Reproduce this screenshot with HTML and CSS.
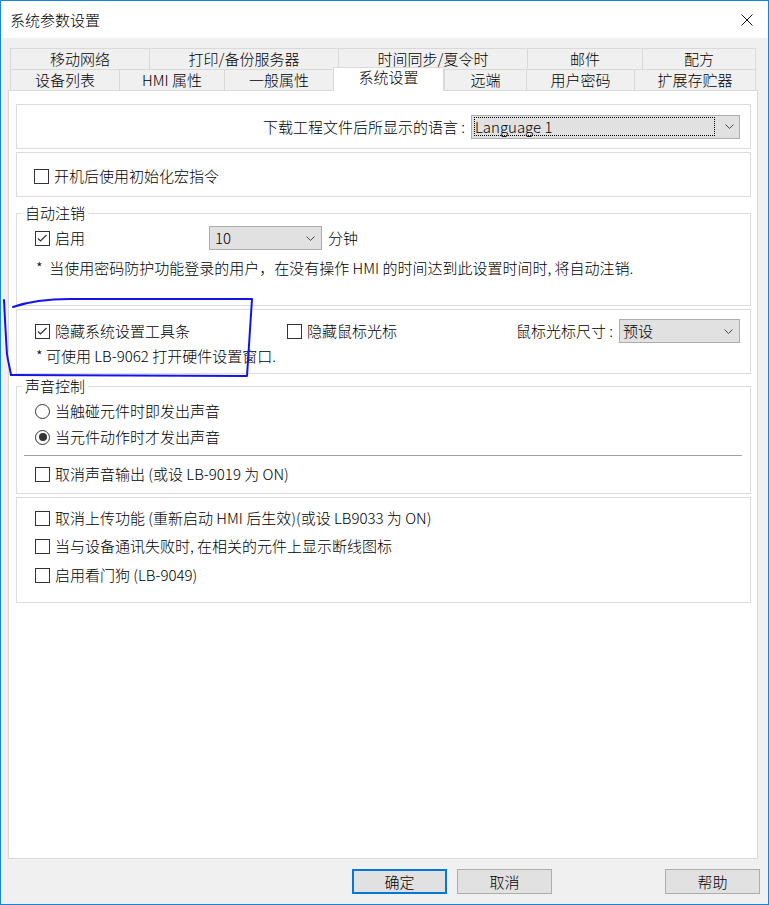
FILE: index.html
```html
<!DOCTYPE html>
<html lang="zh-CN">
<head>
<meta charset="utf-8">
<title>系统参数设置</title>
<link rel="stylesheet" href="styles.css">
</head>
<body>
<div class="window">
  <div class="titlebar">
    <span class="title">系统参数设置</span>
    <svg class="close" width="12" height="12" viewBox="0 0 12 12"><path d="M0.5 0.5 L11.5 11.5 M11.5 0.5 L0.5 11.5"/></svg>
  </div>
  <div class="body">
    <div class="tabs">
      <div class="tabrow top">
        <div class="tab">移动网络</div>
        <div class="tab">打印/备份服务器</div>
        <div class="tab">时间同步/夏令时</div>
        <div class="tab">邮件</div>
        <div class="tab">配方</div>
      </div>
      <div class="tabrow bottom">
        <div class="tab">设备列表</div>
        <div class="tab">HMI 属性</div>
        <div class="tab">一般属性</div>
        <div class="tab active">系统设置</div>
        <div class="tab">远端</div>
        <div class="tab">用户密码</div>
        <div class="tab">扩展存贮器</div>
      </div>
    </div>
    <div class="panel">
      <div class="box lang">
        <span class="label">下载工程文件后所显示的语言 :</span>
        <div class="select lang-select"><span class="val">Language 1</span><svg class="chev" viewBox="0 0 9 5"><path d="M0.5 0.5 L4.5 4.5 L8.5 0.5"/></svg></div>
      </div>
      <div class="box init">
        <label class="check"><span class="cb"></span><span>开机后使用初始化宏指令</span></label>
      </div>
      <fieldset class="group logout">
        <legend>自动注销</legend>
        <div class="row">
          <label class="check w174"><span class="cb"><svg viewBox="0 0 13 13"><path d="M2 6.5 L4.5 9 L10.5 3"/></svg></span><span>启用</span></label>
          <div class="select min-select"><span class="val">10</span><svg class="chev" viewBox="0 0 9 5"><path d="M0.5 0.5 L4.5 4.5 L8.5 0.5"/></svg></div>
          <span class="unit">分钟</span>
        </div>
        <div class="note">* &nbsp;当使用密码防护功能登录的用户，在没有操作 HMI 的时间达到此设置时间时, 将自动注销.</div>
      </fieldset>
      <div class="box toolbar">
        <div class="row">
          <label class="check w252"><span class="cb"><svg viewBox="0 0 13 13"><path d="M2 6.5 L4.5 9 L10.5 3"/></svg></span><span>隐藏系统设置工具条</span></label>
          <label class="check"><span class="cb"></span><span>隐藏鼠标光标</span></label>
          <span class="label push">鼠标光标尺寸 :</span>
          <div class="select size-select"><span class="val">预设</span><svg class="chev" viewBox="0 0 9 5"><path d="M0.5 0.5 L4.5 4.5 L8.5 0.5"/></svg></div>
        </div>
        <div class="note">* 可使用 LB-9062 打开硬件设置窗口.</div>
      </div>
      <fieldset class="group sound">
        <legend>声音控制</legend>
        <label class="radio-row first"><span class="rb"></span><span>当触碰元件时即发出声音</span></label>
        <label class="radio-row"><span class="rb on"></span><span>当元件动作时才发出声音</span></label>
        <div class="sep"></div>
        <label class="check sound-off"><span class="cb"></span><span>取消声音输出 (或设 LB-9019 为 ON)</span></label>
      </fieldset>
      <div class="box misc">
        <label class="check line"><span class="cb"></span><span>取消上传功能 (重新启动 HMI 后生效)(或设 LB9033 为 ON)</span></label>
        <label class="check line"><span class="cb"></span><span>当与设备通讯失败时, 在相关的元件上显示断线图标</span></label>
        <label class="check line"><span class="cb"></span><span>启用看门狗 (LB-9049)</span></label>
      </div>
    </div>
    <div class="buttons">
      <div class="btn primary">确定</div>
      <div class="btn">取消</div>
      <div class="btn help">帮助</div>
    </div>
  </div>
  <svg class="annotation" width="769" height="905" viewBox="0 0 769 905">
    <path d="M13 307 C 30 301, 48 299, 70 299 L 252 299 L 247 376 L 11 375"/>
    <path d="M4 300 C 5 320, 6 340, 7 354 C 8 362, 10 368, 11 375"/>
  </svg>
</div>
</body>
</html>
```

FILE: styles.css
```css
* { box-sizing: border-box; }
html, body { margin: 0; padding: 0; }
body {
  font-family: "Noto Sans CJK SC", "Noto Sans", sans-serif;
  font-size: 15px;
  font-weight: 300;
  color: #000;
  background: #fff;
}
.window {
  position: relative;
  width: 769px;
  height: 905px;
  border: 1px solid #1883d7;
  background: #f0f0f0;
  display: flex;
  flex-direction: column;
}
.titlebar {
  flex: none;
  height: 37px;
  background: #fff;
  display: flex;
  align-items: center;
  justify-content: space-between;
  padding: 0 15px 0 9px;
}
.title { line-height: 20px; }
.close path { stroke: #111; stroke-width: 1; fill: none; }

.body {
  flex: 1;
  display: flex;
  flex-direction: column;
  padding: 10px 10px 10px 7px;
  min-height: 0;
}
.tabs { flex: none; margin-left: 2px; width: 746px; }
.tabrow { display: grid; height: 21px; }
.tabrow.top { grid-template-columns: 139px 189px 189px 115px 114px; }
.tabrow.bottom { grid-template-columns: 109px 105px 109px 111px 82px 108px 122px; }
.tab {
  border-top: 1px solid #d9d9d9;
  border-left: 1px solid #d9d9d9;
  text-align: center;
  line-height: 20px;
  white-space: nowrap;
}
.tab:last-child { border-right: 1px solid #d9d9d9; }
.tab.active {
  position: relative;
  z-index: 1;
  background: #fff;
  margin-top: -2px;
  height: 24px;
  border-right: 1px solid #d9d9d9;
  line-height: 18px;
}

.panel {
  flex: 1;
  background: #fff;
  border: 1px solid #d9d9d9;
  padding: 13px 6px 0 7px;
  display: flex;
  flex-direction: column;
}
.box { border: 1px solid #dcdcdc; flex: none; }
.label { line-height: 20px; white-space: nowrap; }
.check { display: flex; align-items: center; gap: 5px; line-height: 20px; white-space: nowrap; }
.cb {
  flex: none;
  width: 15px;
  height: 15px;
  border: 1px solid #333;
  background: #fff;
  display: flex;
}
.cb svg { width: 13px; height: 13px; fill: none; stroke: #333; stroke-width: 1.2; }
.rb {
  flex: none;
  width: 15px;
  height: 15px;
  border: 1px solid #333;
  border-radius: 50%;
  background: #fff;
  display: flex;
  align-items: center;
  justify-content: center;
}
.rb.on::after {
  content: "";
  width: 8px;
  height: 8px;
  border-radius: 50%;
  background: #333;
}
.select {
  flex: none;
  display: flex;
  align-items: center;
  height: 24px;
  border: 1px solid #adadad;
  background: #e1e1e1;
  padding-right: 5px;
}
.select .val { flex: 1; line-height: 20px; white-space: nowrap; }
.chev { width: 9px; height: 5px; flex: none; }
.chev path { fill: none; stroke: #444; stroke-width: 1; }

.box.lang {
  height: 45px;
  display: flex;
  align-items: center;
  justify-content: flex-end;
  padding-right: 10px;
}
.lang-select { width: 269px; margin-left: 6px; padding-left: 2px; }
.lang-select .val {
  height: 19px;
  line-height: 17px;
  border: 1px dotted #000;
  margin-right: 10px;
  padding-left: 0;
}
.box.init {
  margin-top: 3px;
  height: 45px;
  display: flex;
  align-items: center;
  padding: 3px 0 0 17px;
}

.group {
  flex: none;
  margin: 0;
  border: 1px solid #dcdcdc;
  padding: 0 10px 0 18px;
  min-width: 0;
}
.group legend {
  margin-left: -13px;
  padding: 0 3px;
  line-height: 16px;
}
.group.logout { margin-top: 8px; padding-bottom: 27px; }
.logout .row { display: flex; align-items: center; height: 24px; margin-top: 5px; }
.w174 { width: 174px; }
.w252 { width: 252px; }
.min-select { width: 113px; padding-left: 5px; padding-right: 6px; }
.unit { margin-left: 6px; line-height: 20px; }
.note { line-height: 20px; margin-left: 1px; white-space: nowrap; }
.logout .note { margin-top: 8px; }

.box.toolbar {
  margin-top: 3px;
  height: 65px;
  padding: 9px 10px 0 18px;
}
.toolbar .row { display: flex; align-items: center; height: 24px; }
.push { margin-left: auto; }
.size-select { width: 121px; margin-left: 6px; padding-left: 3px; padding-right: 6px; }
.toolbar .note { margin-top: 3px; }

.group.sound { margin-top: 4px; padding-bottom: 6px; }
.radio-row { display: flex; align-items: center; gap: 5px; height: 26px; line-height: 20px; }
.radio-row.first { margin-top: 4px; }
.sep { height: 1px; background: #a0a0a0; margin: 5px -2px 0 -11px; }
.sound-off { height: 26px; margin-top: 5px; }

.box.misc {
  margin-top: 3px;
  height: 106px;
  padding: 8px 10px 0 18px;
}
.misc .line { height: 24px; }
.misc .line + .line { margin-top: 4px; }
.misc .line:last-child { margin-top: 5px; }

.buttons {
  flex: none;
  display: flex;
  justify-content: flex-end;
  margin-top: 10px;
  margin-right: -2px;
  height: 25px;
}
.btn {
  width: 95px;
  height: 25px;
  border: 1px solid #adadad;
  background: #e1e1e1;
  text-align: center;
  line-height: 23px;
}
.btn.primary { border: 2px solid #0078d7; line-height: 21px; }
.btn + .btn { margin-left: 10px; }
.btn.help { margin-left: 113px; }

.annotation {
  position: absolute;
  left: -1px;
  top: -1px;
  pointer-events: none;
}
.annotation path { fill: none; stroke: #1414e6; stroke-width: 2; stroke-linecap: round; stroke-linejoin: round; }
```
